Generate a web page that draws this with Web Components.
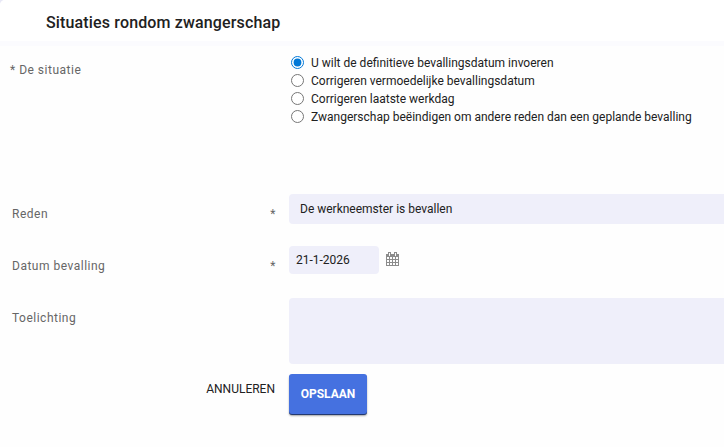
<!DOCTYPE html>
<html lang="nl">
<head>
<meta charset="utf-8">
<title>Situaties rondom zwangerschap</title>
<style>
  body {
    margin: 0;
    background: #e8e8f6;
    font: 12px/18px Roboto, "Liberation Sans", sans-serif;
    color: #212121;
    overflow: hidden;
  }
</style>
</head>
<body>
<form-panel heading="Situaties rondom zwangerschap">
  <form-row class="situation" label="* De situatie">
    <radio-option checked>U wilt de definitieve bevallingsdatum invoeren</radio-option>
    <radio-option>Corrigeren vermoedelijke bevallingsdatum</radio-option>
    <radio-option>Corrigeren laatste werkdag</radio-option>
    <radio-option>Zwangerschap beëindigen om andere reden dan een geplande bevalling</radio-option>
  </form-row>
  <form-row label="Reden" required style="--height: 52px">
    <field-box style="--box-height: 30px; --indent: 11px">De werkneemster is bevallen</field-box>
  </form-row>
  <form-row label="Datum bevalling" required style="--height: 52px">
    <date-field value="21-1-2026"></date-field>
  </form-row>
  <form-row label="Toelichting" style="--height: 76px">
    <field-box style="--box-height: 66px"></field-box>
  </form-row>
  <form-actions cancel="ANNULEREN" save="OPSLAAN"></form-actions>
</form-panel>

<script>
class FormPanel extends HTMLElement {
  constructor() {
    super();
    this.attachShadow({mode: 'open'});
    this.shadowRoot.innerHTML = `
      <style>
        :host {
          display: block;
          box-sizing: border-box;
          height: 100vh;
          background: #fefefe;
          border-radius: 5px 0 0 0;
          overflow: hidden;
        }
        h1 {
          margin: 0;
          padding: 13px 0 8px 46px;
          font-size: 16px;
          font-weight: 500;
          line-height: 20px;
          letter-spacing: 0.15px;
          background: #fff;
          border-bottom: 5px solid #fbfbfe;
        }
      </style>
      <h1></h1>
      <slot></slot>
    `;
    this.shadowRoot.querySelector('h1').textContent = this.getAttribute('heading');
  }
}

window.customElements.define('form-panel', FormPanel);

///////////////////
// Label column on the left, control on the right
class FormRow extends HTMLElement {
  constructor() {
    super();
    this.attachShadow({mode: 'open'});
    this.shadowRoot.innerHTML = `
      <style>
        :host {
          display: grid;
          grid-template-columns: 289px 1fr;
          height: var(--height);
        }
        :host(.situation) {
          height: 141px;
          padding-top: 7px;
        }
        .label {
          display: flex;
          justify-content: space-between;
          align-self: start;
          padding: 11px 13px 0 12px;
          color: #666;
          letter-spacing: 0.5px;
        }
        :host(.situation) .label {
          padding: 8px 0 0 10px;
        }
      </style>
      <div class="label"><span class="text"></span></div>
      <div class="control"><slot></slot></div>
    `;
    this.shadowRoot.querySelector('.text').textContent = this.getAttribute('label');
    if (this.hasAttribute('required')) {
      const star = document.createElement('span');
      star.textContent = '*';
      this.shadowRoot.querySelector('.label').appendChild(star);
    }
  }
}

window.customElements.define('form-row', FormRow);

///////////////////
class RadioOption extends HTMLElement {
  constructor() {
    super();
    this.attachShadow({mode: 'open'});
    this.shadowRoot.innerHTML = `
      <style>
        :host {
          display: block;
        }
        label {
          display: flex;
          align-items: center;
          gap: 7px;
          height: 18px;
          padding-left: 2px;
        }
        input {
          width: 13px;
          height: 13px;
          margin: 0;
          accent-color: #0078d7;
        }
        span {
          padding-top: 2px;
        }
      </style>
      <label><input type="radio"><span><slot></slot></span></label>
    `;
    this.shadowRoot.querySelector('input').checked = this.hasAttribute('checked');
  }
}

window.customElements.define('radio-option', RadioOption);

///////////////////
class FieldBox extends HTMLElement {
  constructor() {
    super();
    this.attachShadow({mode: 'open'});
    this.shadowRoot.innerHTML = `
      <style>
        :host {
          display: flex;
          align-items: center;
          box-sizing: border-box;
          width: var(--box-width, auto);
          height: var(--box-height);
          padding-left: var(--indent, 0);
          background: #efeffa;
          border-radius: var(--radius, 4px 0 0 4px);
        }
      </style>
      <slot></slot>
    `;
  }
}

window.customElements.define('field-box', FieldBox);

///////////////////
class DateField extends HTMLElement {
  constructor() {
    super();
    this.attachShadow({mode: 'open'});
    this.shadowRoot.innerHTML = `
      <style>
        :host {
          display: flex;
          align-items: center;
          gap: 7px;
        }
        field-box {
          --box-width: 90px;
          --box-height: 28px;
          --indent: 7px;
          --radius: 4px;
        }
        svg {
          display: block;
          margin-top: -2px;
        }
      </style>
      <field-box></field-box>
      <svg width="13" height="14" viewBox="0 0 13 14" shape-rendering="crispEdges">
        <path fill="#8c8c8c" fill-rule="evenodd" d="M0 2h2V0h3v2h3V0h3v2h2v12H0z
          M3 1v3h1V1z M9 1v3h1V1z
          M1 5h2v2H1z M4 5h2v2H4z M7 5h2v2H7z M10 5h2v2h-2z
          M1 8h2v2H1z M4 8h2v2H4z M7 8h2v2H7z M10 8h2v2h-2z
          M1 11h2v2H1z M4 11h2v2H4z M7 11h2v2H7z M10 11h2v2h-2z"/>
      </svg>
    `;
    this.shadowRoot.querySelector('field-box').textContent = this.getAttribute('value');
  }
}

window.customElements.define('date-field', DateField);

///////////////////
class FormActions extends HTMLElement {
  constructor() {
    super();
    this.attachShadow({mode: 'open'});
    this.shadowRoot.innerHTML = `
      <style>
        :host {
          display: grid;
          grid-template-columns: 275px 78px;
          column-gap: 14px;
        }
        button {
          padding: 0;
          border: 0;
          background: none;
          font: inherit;
          color: inherit;
        }
        .cancel {
          height: 30px;
          justify-self: end;
        }
        .save {
          height: 40px;
          border-radius: 3px;
          background: #4571e0;
          box-shadow: 0 1px 0 #24396f, 0 2px 2px rgba(0, 0, 0, 0.35);
          color: #fff;
          font-weight: 700;
        }
      </style>
      <button class="cancel"></button>
      <button class="save"></button>
    `;
    this.shadowRoot.querySelector('.cancel').textContent = this.getAttribute('cancel');
    this.shadowRoot.querySelector('.save').textContent = this.getAttribute('save');
  }
}

window.customElements.define('form-actions', FormActions);
</script>
</body>
</html>
